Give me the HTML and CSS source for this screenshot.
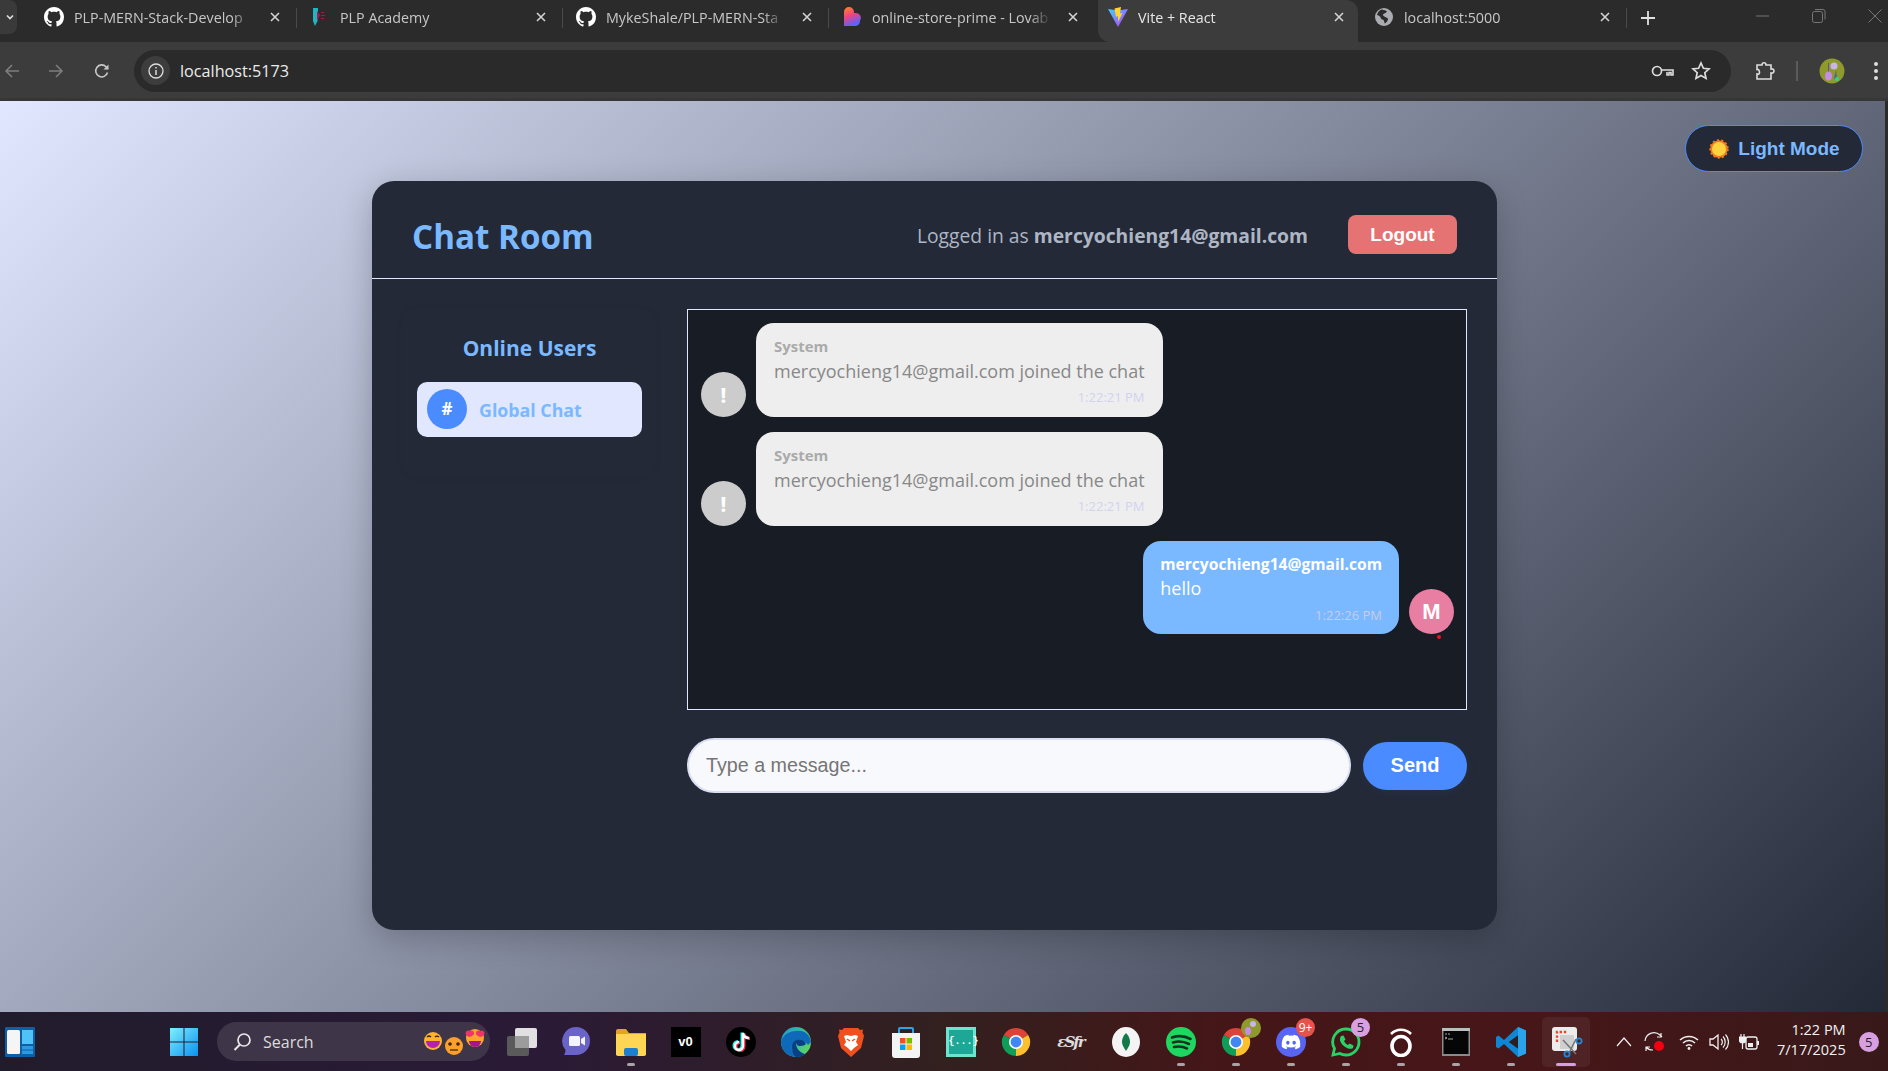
FILE: index.html
```html
<!DOCTYPE html>
<html lang="en">
<head>
<meta charset="utf-8">
<title>Vite + React</title>
<link rel="stylesheet" href="styles.css">
</head>
<body>
<svg class="defs" aria-hidden="true">
  <symbol id="gh" viewBox="0 0 16 16"><path fill="#fff" d="M8 0C3.58 0 0 3.58 0 8c0 3.54 2.29 6.53 5.47 7.59.4.07.55-.17.55-.38 0-.19-.01-.82-.01-1.49-2.01.37-2.53-.49-2.69-.94-.09-.23-.48-.94-.82-1.13-.28-.15-.68-.52-.01-.53.63-.01 1.08.58 1.23.82.72 1.21 1.87.87 2.33.66.07-.52.28-.87.51-1.07-1.78-.2-3.64-.89-3.64-3.95 0-.87.31-1.59.82-2.15-.08-.2-.36-1.02.08-2.12 0 0 .67-.21 2.2.82.64-.18 1.32-.27 2-.27.68 0 1.36.09 2 .27 1.53-1.04 2.2-.82 2.2-.82.44 1.1.16 1.92.08 2.12.51.56.82 1.27.82 2.15 0 3.07-1.87 3.75-3.65 3.95.29.25.54.73.54 1.48 0 1.07-.01 1.93-.01 2.2 0 .21.15.46.55.38A8.013 8.013 0 0016 8c0-4.42-3.58-8-8-8z"/></symbol>
  <symbol id="x" viewBox="0 0 12 12"><path d="M2 2l8 8M10 2l-8 8" stroke="#d4d4d4" stroke-width="1.6" fill="none"/></symbol>
  <symbol id="chrome" viewBox="0 0 32 32">
    <path fill="#db4437" d="M16 16L3 8.500A15 15 0 0 1 29 8.500Z"/>
    <path fill="#0f9d58" d="M16 16L3 8.500A15 15 0 0 0 16 31Z"/>
    <path fill="#fbc02d" d="M16 16L29 8.500A15 15 0 0 1 16 31Z"/>
    <circle cx="16" cy="16" r="7.500" fill="#fff"/><circle cx="16" cy="16" r="5.800" fill="#4285f4"/>
  </symbol>
  <symbol id="globe" viewBox="0 0 20 20"><circle cx="10" cy="10" r="9" fill="#a9acb0"/><path fill="#2b2b2b" d="M8 2.500c2 1 4 .5 5 2-1 2-3 1.500-4 3-.5 1 1 1.500 2 2.500 2 .5 3 1 3 2.500-.5 2-2 3-3 4-1-.500-.500-2.500-1.500-3.500-2-.5-3-2-3.500-3.500-1-1-2-1.500-3-1.500.5-2.500 2.500-5 4.500-5.500z"/></symbol>
</svg>

<div class="tabbar">
  <button class="tab-list"><svg width="12" height="12" viewBox="0 0 12 12"><path d="M3 4.500l3 3 3-3" stroke="#ddd" stroke-width="1.700" fill="none"/></svg></button>
  <div class="tab"><svg class="fav"><use href="#gh"/></svg><span class="tab-title">PLP-MERN-Stack-Develop</span><svg class="close"><use href="#x"/></svg></div>
  <div class="tab sep"><svg class="fav" viewBox="0 0 20 20"><path fill="#1fb6c4" d="M3 1h5v12l-3 6-2-5z"/><path fill="#b3124e" d="M7 4l3 4-3 6zM11 5h3v1h-3zM11 8h4v1h-4zM11 11h3v1h-3z"/></svg><span class="tab-title">PLP Academy</span><svg class="close"><use href="#x"/></svg></div>
  <div class="tab sep"><svg class="fav"><use href="#gh"/></svg><span class="tab-title">MykeShale/PLP-MERN-Sta</span><svg class="close"><use href="#x"/></svg></div>
  <div class="tab sep"><svg class="fav" viewBox="0 0 20 20"><defs><linearGradient id="lov" x1="0" y1="0" x2=".4" y2="1"><stop offset="0" stop-color="#ff8a1f"/><stop offset=".5" stop-color="#f0427f"/><stop offset="1" stop-color="#5a62ff"/></linearGradient></defs><path fill="url(#lov)" d="M2 5a5 5 0 0 1 10 0v1h2a5 5 0 0 1 4 8 5 5 0 0 1-4 5H2z"/></svg><span class="tab-title">online-store-prime - Lovab</span><svg class="close"><use href="#x"/></svg></div>
  <div class="tab active"><svg class="fav" viewBox="0 0 20 20"><defs><linearGradient id="vite" x1="0" y1="0" x2="1" y2="1"><stop offset="0" stop-color="#41d1ff"/><stop offset="1" stop-color="#bd34fe"/></linearGradient></defs><path fill="url(#vite)" d="M0 2l10 1.500L20 2 10 20z"/><path fill="#ffd62e" d="M13 0L6.500 1.500 8 10l2-1v6l4.500-9-2.500.5z"/></svg><span class="tab-title">Vite + React</span><svg class="close"><use href="#x"/></svg></div>
  <div class="tab"><svg class="fav"><use href="#globe"/></svg><span class="tab-title">localhost:5000</span><svg class="close"><use href="#x"/></svg></div>
  <span class="tab-divider"></span>
  <svg class="newtab" width="14" height="14" viewBox="0 0 14 14"><path d="M7 0v14M0 7h14" stroke="#e0e0e0" stroke-width="1.800"/></svg>
  <div class="winctl">
    <svg width="14" height="14" viewBox="0 0 14 14"><path d="M0 7h13" stroke="#777" stroke-width="1"/></svg>
    <svg width="14" height="14" viewBox="0 0 14 14"><rect x=".5" y="2.500" width="10" height="11" rx="2" fill="none" stroke="#777"/><path d="M3 .5h8a2 2 0 0 1 2 2v8" fill="none" stroke="#777"/></svg>
    <svg width="14" height="14" viewBox="0 0 14 14"><path d="M.5.5l13 13M13.500.5l-13 13" stroke="#777"/></svg>
  </div>
</div>

<div class="toolbar">
  <svg class="nav" width="16" height="16" viewBox="0 0 16 16"><path d="M15 8H2M8 2L2 8l6 6" stroke="#7d7d7d" stroke-width="1.600" fill="none"/></svg>
  <svg class="nav" width="16" height="16" viewBox="0 0 16 16"><path d="M1 8h13M8 2l6 6-6 6" stroke="#7d7d7d" stroke-width="1.600" fill="none"/></svg>
  <svg class="nav" width="16" height="16" viewBox="0 0 16 16"><path d="M13.500 9.500A6 6 0 1 1 12 3.700L14 6" stroke="#c8c8c8" stroke-width="1.600" fill="none"/><path d="M14.500 1.500v5h-5z" fill="#c8c8c8"/></svg>
  <div class="omnibox">
    <span class="site-info"><svg width="16" height="16" viewBox="0 0 16 16"><circle cx="8" cy="8" r="7" fill="none" stroke="#ddd" stroke-width="1.300"/><path d="M8 7v5M8 4v1.600" stroke="#ddd" stroke-width="1.500"/></svg></span>
    <span class="url">localhost:5173</span>
    <svg class="omni-icon" width="24" height="14" viewBox="0 0 24 14"><circle cx="6" cy="7" r="4.500" fill="none" stroke="#ddd" stroke-width="1.700"/><path d="M10.500 6H22v5h-2V8.500h-2V11h-2V8" fill="none" stroke="#ddd" stroke-width="1.600"/></svg>
    <svg class="omni-star" width="20" height="20" viewBox="0 0 20 20"><path d="M10 2l2.400 5.300 5.600.6-4.200 3.800 1.200 5.700-5-2.900-5 2.900 1.200-5.700L2 7.900l5.600-.6z" fill="none" stroke="#ddd" stroke-width="1.700"/></svg>
  </div>
  <svg class="ext" width="20" height="20" viewBox="0 0 20 20"><path d="M2 4h5c0-3 4-3 4 0h5v4c2-.5 3 1 3 2s-1 2.500-3 2v6H2v-5c2 .5 2.500-.5 2.500-1.500S4 8 2 8.500z" fill="none" stroke="#ddd" stroke-width="1.600"/></svg>
  <span class="tool-sep"></span>
  <svg class="profile" width="26" height="26" viewBox="0 0 26 26"><circle cx="13" cy="13" r="12.500" fill="#8f9a2c"/><circle cx="15" cy="8" r="3.500" fill="#c9b5e8"/><path d="M9 5h1v10H9z" fill="#6c4aa0"/><ellipse cx="9.500" cy="18" rx="3.500" ry="4.500" fill="#c78be8"/><path d="M17 12l1 9h-3z" fill="#4a5fa0"/><circle cx="18" cy="21" r="2" fill="#2dd48f"/></svg>
  <svg class="kebab" width="6" height="20" viewBox="0 0 6 20"><circle cx="3" cy="3" r="2" fill="#ddd"/><circle cx="3" cy="10" r="2" fill="#ddd"/><circle cx="3" cy="17" r="2" fill="#ddd"/></svg>
</div>

<main class="page">
  <button class="theme-toggle"><svg width="22" height="22" viewBox="0 0 22 22"><circle cx="11" cy="11" r="8.700" fill="#f47a1f" stroke="#f47a1f" stroke-width="2" stroke-dasharray="2 2.300"/><circle cx="11" cy="11" r="7" fill="#ffd23f"/></svg><span>Light Mode</span></button>
  <section class="chat-card">
    <header class="chat-head">
      <h1 class="chat-title">Chat Room</h1>
      <div class="chat-user">Logged in as <strong>mercyochieng14@gmail.com</strong></div>
      <button class="logout">Logout</button>
    </header>
    <div class="chat-body">
      <aside class="users">
        <h2 class="users-title">Online Users</h2>
        <div class="user-item"><span class="user-hash">#</span><span class="user-name">Global Chat</span></div>
      </aside>
      <div class="chat-main">
        <div class="messages">
          <div class="msg">
            <span class="avatar sys">!</span>
            <div class="bubble"><div class="sender">System</div><div class="text">mercyochieng14@gmail.com joined the chat</div><div class="time">1:22:21 PM</div></div>
          </div>
          <div class="msg">
            <span class="avatar sys">!</span>
            <div class="bubble"><div class="sender">System</div><div class="text">mercyochieng14@gmail.com joined the chat</div><div class="time">1:22:21 PM</div></div>
          </div>
          <div class="msg own">
            <div class="bubble"><div class="sender">mercyochieng14@gmail.com</div><div class="text">hello</div><div class="time">1:22:26 PM</div></div>
            <span class="avatar me">M<i class="status"></i></span>
          </div>
        </div>
        <form class="composer">
          <input class="composer-input" type="text" placeholder="Type a message...">
          <button class="send" type="button">Send</button>
        </form>
      </div>
    </div>
  </section>
</main>

<footer class="taskbar">
  <svg class="tb-widget" width="30" height="30" viewBox="0 0 30 30"><rect width="30" height="30" rx="1" fill="#0f5ea8"/><rect x="2" y="3" width="13" height="24" rx="1.500" fill="#f5f5f5"/><rect x="17" y="3" width="11" height="14" fill="#4fc3f7"/><rect x="17" y="19" width="11" height="3.500" fill="#2a9be0"/><rect x="17" y="23.500" width="11" height="3.500" fill="#2a9be0"/></svg>
  <svg class="tb-start" width="30" height="30" viewBox="0 0 30 30"><defs><linearGradient id="win" x1="0" y1="0" x2="1" y2="1"><stop offset="0" stop-color="#7df0ff"/><stop offset="1" stop-color="#0c8fee"/></linearGradient></defs><path fill="url(#win)" d="M1 1h13.500v13.500H1zM15.500 1H29v13.500H15.500zM1 15.500h13.500V29H1zM15.500 15.500H29V29H15.500z"/></svg>
  <div class="tb-search">
    <svg width="20" height="20" viewBox="0 0 20 20"><circle cx="12" cy="8" r="6" fill="none" stroke="#e8e8e8" stroke-width="1.700"/><path d="M8 12.500L2.500 18" stroke="#e8e8e8" stroke-width="2"/></svg>
    <span class="tb-search-text">Search</span>
    <svg class="tb-emoji" width="66" height="30" viewBox="0 0 66 30">
      <circle cx="10" cy="12" r="9" fill="#fdb232"/><path d="M3 12h14a7 7 0 0 1-14 0z" fill="#b521b0"/><path d="M4 8q2-2 4 0M12 8q2-2 4 0" stroke="#3a2200" stroke-width="1.200" fill="none"/>
      <circle cx="52" cy="9" r="9" fill="#fda52e"/><path d="M46 12h12a6 6 0 0 1-12 0z" fill="#a8148f"/><path d="M47 2c2-1.500 4 0 4 2.500 0 2-3 3-4.500 3.500-1.500-.5-4-2-4-3.500C42.500 2 45 1 47 2zM57 2c2-1.500 4.500 0 4.500 2.500 0 1.500-2.500 3-4 3.500-1.500-.5-4.500-1.500-4.500-3.500C53 2 55 .5 57 2z" fill="#f2326a"/>
      <circle cx="31" cy="17" r="9" fill="#fd9f2c"/><circle cx="27" cy="15" r="1.800" fill="#3a2200"/><circle cx="35" cy="15" r="1.800" fill="#3a2200"/><path d="M27 21h8" stroke="#3a2200" stroke-width="1.200"/>
    </svg>
  </div>
  <div class="tb-apps">
    <div class="app"><svg width="32" height="30" viewBox="0 0 32 30"><rect x="2" y="9" width="22" height="20" rx="2" fill="#5a5a5a"/><rect x="10" y="1" width="22" height="20" rx="2" fill="#f0f0f0" fill-opacity=".92"/><rect x="10" y="9" width="14" height="12" fill="#9c9c9c"/></svg></div>
    <div class="app"><svg width="30" height="32" viewBox="0 0 30 32"><path d="M15 1a14 14 0 1 1 0 28H3c1-1.500 1.500-3.500 1.500-5A14 14 0 0 1 15 1z" fill="#6a64c8"/><rect x="8" y="10" width="11" height="10" rx="1.500" fill="#f4f4fb"/><path d="M20 13l4-2.500v9L20 17z" fill="#f4f4fb"/></svg></div>
    <div class="app"><svg width="30" height="28" viewBox="0 0 30 28"><path d="M0 3a2 2 0 0 1 2-2h8l3 4h17v22H0z" fill="#e2a51b"/><path d="M0 6h30v20a2 2 0 0 1-2 2H2a2 2 0 0 1-2-2z" fill="#ffd654"/><rect x="8" y="20" width="14" height="8" rx="2" fill="#1e7fd0"/></svg><i class="dot"></i></div>
    <div class="app"><span class="v0">v0</span></div>
    <div class="app"><svg width="30" height="30" viewBox="0 0 30 30"><circle cx="15" cy="15" r="15" fill="#000"/><path d="M17 6v13a4 4 0 1 1-4-4M17 6c.5 3 2.500 5 6 5" fill="none" stroke="#25f4ee" stroke-width="3" transform="translate(-1 -.5)"/><path d="M17 6v13a4 4 0 1 1-4-4M17 6c.5 3 2.500 5 6 5" fill="none" stroke="#fe2c55" stroke-width="3" transform="translate(1 .5)"/><path d="M17 6v13a4 4 0 1 1-4-4M17 6c.5 3 2.500 5 6 5" fill="none" stroke="#fff" stroke-width="2.400"/></svg></div>
    <div class="app"><svg width="30" height="30" viewBox="0 0 30 30"><defs><linearGradient id="edgeg" x1="0" y1="0" x2="1" y2=".6"><stop offset="0" stop-color="#1a9ad8"/><stop offset="1" stop-color="#57d468"/></linearGradient></defs><circle cx="15" cy="15" r="15" fill="url(#edgeg)"/><path d="M0 15A15 15 0 0 0 15 30c4 0 7-1 9-3-6 2-12 0-13-5-1-4 3-8 8-8 3 0 6 1 8 4l3-3C29 8 24 3 15 4 7 4 1 9 0 15z" fill="#0e6ab8"/><path d="M11 20c0-5 4-8 8-7 3 0 5 2 6 4-1 1-3 2-6 2-3 0-3-2-4-3 0 5 3 9 9 11-2 2-5 3-9 3-3-2-4-6-4-10z" fill="#0a3f86"/></svg></div>
    <div class="app"><svg width="26" height="30" viewBox="0 0 26 30"><path d="M6 1h14l2 2 3-.5-.5 3L26 9l-3 12-10 9-10-9L0 9l1.500-3.500L1 2.500 4 3z" fill="#f0501e"/><path d="M6 9l3-1 4 1 4-1 3 1-2 6 2 3-4 3-3 3-3-3-4-3 2-3z" fill="#fff"/><path d="M9 12l3 2M17 12l-3 2" stroke="#f0501e" stroke-width="1.500"/></svg></div>
    <div class="app"><svg width="30" height="32" viewBox="0 0 30 32"><path d="M8 8V3a1 1 0 0 1 1-1h12a1 1 0 0 1 1 1v5" fill="none" stroke="#2aa5e8" stroke-width="2"/><path d="M1 7h28v22a3 3 0 0 1-3 3H4a3 3 0 0 1-3-3z" fill="#f4f4f4"/><rect x="9" y="12" width="5.500" height="5.500" fill="#f25022"/><rect x="15.500" y="12" width="5.500" height="5.500" fill="#7fba00"/><rect x="9" y="18.500" width="5.500" height="5.500" fill="#00a4ef"/><rect x="15.500" y="18.500" width="5.500" height="5.500" fill="#ffb900"/></svg></div>
    <div class="app"><span class="braces">{...}</span></div>
    <div class="app"><svg width="30" height="30"><use href="#chrome"/></svg></div>
    <div class="app"><span class="esb">ɛSfr</span></div>
    <div class="app"><svg width="28" height="30" viewBox="0 0 28 30"><ellipse cx="14" cy="15" rx="14" ry="15" fill="#f4f4f4"/><path d="M14 6c3 3 4 6 4 9s-2 6-4 9c-2-3-4-6-4-9s1-6 4-9z" fill="#13794c"/></svg></div>
    <div class="app"><svg width="30" height="30" viewBox="0 0 30 30"><circle cx="15" cy="15" r="15" fill="#1ed760"/><path d="M6 10.500c6-2 13-1.500 18.500 1.500M7 15.500c5-1.500 11-1 16 1.500M8 20c4.500-1 9-.5 13 1.500" fill="none" stroke="#16331f" stroke-width="2.600" stroke-linecap="round"/></svg><i class="dot"></i></div>
    <div class="app"><svg width="30" height="30"><use href="#chrome"/></svg><i class="dot"></i><svg class="badge-pic" width="20" height="20" viewBox="0 0 20 20"><circle cx="10" cy="10" r="10" fill="#8f9a2c"/><ellipse cx="7" cy="13" rx="3" ry="4" fill="#c78be8"/><circle cx="12" cy="6" r="3" fill="#c9b5e8"/></svg></div>
    <div class="app"><svg width="30" height="30" viewBox="0 0 30 30"><circle cx="15" cy="15" r="15" fill="#5865f2"/><svg x="5.500" y="5.500" width="19" height="19" viewBox="0 0 24 24"><path fill="#fff" d="M20.317 4.370a19.791 19.791 0 0 0-4.885-1.515.074.074 0 0 0-.079.037c-.21.375-.444.864-.608 1.250a18.270 18.270 0 0 0-5.487 0 12.640 12.640 0 0 0-.617-1.250.077.077 0 0 0-.079-.037A19.736 19.736 0 0 0 3.677 4.370a.07.07 0 0 0-.032.027C.533 9.046-.32 13.580.099 18.057a.082.082 0 0 0 .031.057 19.900 19.900 0 0 0 5.993 3.030.078.078 0 0 0 .084-.028c.462-.63.874-1.295 1.226-1.994a.076.076 0 0 0-.041-.106 13.107 13.107 0 0 1-1.872-.892.077.077 0 0 1-.008-.128 10.200 10.200 0 0 0 .372-.292.074.074 0 0 1 .077-.01c3.928 1.793 8.180 1.793 12.062 0a.074.074 0 0 1 .078.01c.12.098.246.198.373.292a.077.077 0 0 1-.006.127 12.299 12.299 0 0 1-1.873.892.077.077 0 0 0-.041.107c.36.698.772 1.362 1.225 1.993a.076.076 0 0 0 .084.028 19.839 19.839 0 0 0 6.002-3.030.077.077 0 0 0 .032-.054c.5-5.177-.838-9.674-3.549-13.660a.061.061 0 0 0-.031-.03zM8.020 15.330c-1.183 0-2.157-1.085-2.157-2.419 0-1.333.956-2.419 2.157-2.419 1.210 0 2.176 1.096 2.157 2.420 0 1.333-.956 2.418-2.157 2.418zm7.975 0c-1.183 0-2.157-1.085-2.157-2.419 0-1.333.955-2.419 2.157-2.419 1.210 0 2.176 1.096 2.157 2.420 0 1.333-.946 2.418-2.157 2.418z"/></svg></svg><i class="dot"></i><span class="count red">9+</span></div>
    <div class="app"><svg width="30" height="30" viewBox="0 0 30 30"><path d="M15 2a13 13 0 0 1 0 26c-2.500 0-4.500-.5-6-1.500L2 28l1.500-6.500A13 13 0 0 1 15 2z" fill="none" stroke="#25d366" stroke-width="2.800"/><path d="M10 9l2.500-.5 2 4-1.500 1.500c1 2 2 3 4 4l1.500-1.500 4 2-.5 2.500c-1 1-3 1-5 .5-4-1.500-7-4.500-8-8-.3-2 .5-3.500 1-4.500z" fill="#25d366"/></svg><i class="dot"></i><span class="count lilac">5</span></div>
    <div class="app"><svg width="24" height="30" viewBox="0 0 24 30"><path d="M2 7a14 14 0 0 1 20 0" fill="none" stroke="#fff" stroke-width="2.600"/><ellipse cx="12" cy="19" rx="9" ry="9.500" fill="none" stroke="#fff" stroke-width="3.600"/></svg><i class="dot"></i></div>
    <div class="app"><svg width="28" height="28" viewBox="0 0 28 28"><rect width="28" height="28" fill="#8a8a8a"/><rect y="0" width="28" height="3" fill="#bdbdbd"/><rect x="1.500" y="3" width="25" height="23" fill="#060606"/><path d="M3 6h2M6 6h2M3 9l2 1-2 1M6 11h5" stroke="#cfcfcf" stroke-width=".8" fill="none"/></svg><i class="dot"></i></div>
    <div class="app"><svg width="30" height="30" viewBox="0 0 30 30"><path d="M22 0l8 3.500v23L22 30 8 17l-5.500 4.500L0 20V10l2.500-1.500L8 13zM22 8.500L13 15l9 6.500z" fill="#0f86d4"/><path d="M22 0l8 3.500v23L22 30z" fill="#2aa3ea"/><path d="M22 8.500v13L13 15z" fill="#2b2020"/></svg><i class="dot"></i></div>
    <div class="app current"><svg width="34" height="32" viewBox="0 0 34 32"><rect x="3" y="1" width="25" height="24" rx="3" fill="#ececec"/><path d="M8 16V6h10" fill="none" stroke="#e8452c" stroke-width="2.400" stroke-dasharray="2.400 1.800"/><path d="M11 9h14v14H11z" fill="#d0d0d0"/><path d="M14 14l13 14M27 13L20 27" stroke="#777" stroke-width="1.600"/><circle cx="30" cy="15" r="2.600" fill="none" stroke="#1f88d8" stroke-width="1.800"/><circle cx="18" cy="28" r="2.600" fill="none" stroke="#1f88d8" stroke-width="1.800"/></svg><i class="dot wide"></i></div>
  </div>
  <div class="tray">
    <svg class="tray-up" width="16" height="10" viewBox="0 0 16 10"><path d="M1 9l7-8 7 8" fill="none" stroke="#f0f0f0" stroke-width="1.200"/></svg>
    <svg class="tray-sync" width="24" height="24" viewBox="0 0 24 24"><path d="M2 11a9 9 0 0 1 15-6l2 2M18 3v4h-4" fill="none" stroke="#eee" stroke-width="1.200"/><path d="M10 20a9 9 0 0 1-7-3M3 21v-4h4" fill="none" stroke="#eee" stroke-width="1.200"/><circle cx="16" cy="16" r="5" fill="#f40012"/></svg>
    <svg width="20" height="16" viewBox="0 0 20 16"><path d="M1 6a13 13 0 0 1 18 0M4 9a8.500 8.500 0 0 1 12 0M7 12a4 4 0 0 1 6 0" fill="none" stroke="#f0f0f0" stroke-width="1.500"/><circle cx="10" cy="14.500" r="1.400" fill="#f0f0f0"/></svg>
    <svg width="20" height="18" viewBox="0 0 20 18"><path d="M1 6h3l5-4v14l-5-4H1z" fill="none" stroke="#f0f0f0" stroke-width="1.300"/><path d="M12 6a4 4 0 0 1 0 6M14 3.500a8 8 0 0 1 0 11M16.500 1.500a11 11 0 0 1 0 15" fill="none" stroke="#f0f0f0" stroke-width="1.200"/></svg>
    <svg width="20" height="18" viewBox="0 0 20 18"><path d="M2 1v3M5 1v3M0.500 4h6v3a3 3 0 0 1-6 0zM3.500 10v6" stroke="#f0f0f0" stroke-width="1.200" fill="#f0f0f0"/><rect x="7" y="4" width="11" height="12" rx="2" fill="none" stroke="#f0f0f0" stroke-width="1.300"/><rect x="18" y="8" width="2" height="4" fill="#f0f0f0"/><rect x="9" y="10" width="5" height="4" fill="#f0f0f0"/></svg>
    <div class="clock"><span>1:22 PM</span><span>7/17/2025</span></div>
    <span class="tray-badge">5</span>
  </div>
</footer>
</body>
</html>
```

FILE: styles.css
```css
* { box-sizing: border-box; }
html, body { margin: 0; height: 1071px; overflow: hidden; }
body { display: flex; flex-direction: column; font-family: "Open Sans", "Noto Sans", sans-serif; background: #2b2b2b; color: #fff; }
.defs { display: none; }
button { font-family: "Liberation Sans", Arial, sans-serif; border: 0; cursor: pointer; }

/* browser tab strip */
.tabbar { height: 42px; flex: none; display: flex; align-items: center; background: #2b2b2b; position: relative; }
.tab-list { height: 34px; padding: 0 0 0 3px; margin-top: -8px; background: #3a3a3a; border-radius: 0 8px 8px 0; display: flex; align-items: center; justify-content: center; flex: none; width: 17px; margin-right: 13px; }
.tab { width: 266px; height: 42px; flex: none; display: flex; align-items: center; padding: 0 15px 8px 14px; position: relative; font-size: 14.300px; color: #c7c7c7; }
.tab.sep::before { content: ""; position: absolute; left: 0; top: 8px; height: 20px; width: 1px; background: #4a4a4a; }
.tab.active { background: #3c3c3c; color: #e6e6e6; clip-path: inset(0 2px 0 4px round 0 12px 0 12px); }
.fav { width: 20px; height: 20px; flex: none; }
.tab-title { flex: 1; margin: 0 0 0 10px; white-space: nowrap; overflow: hidden; -webkit-mask-image: linear-gradient(90deg, #000 88%, transparent 100%); mask-image: linear-gradient(90deg, #000 88%, transparent 100%); }
.close { width: 12px; height: 12px; flex: none; margin-left: 16px; }
.tab-divider { width: 1px; height: 20px; background: #4a4a4a; margin-top: -6px; flex: none; }
.newtab { margin: -6px 0 0 14px; flex: none; }
.winctl { margin-left: auto; display: flex; gap: 42px; padding: 0 6px 10px 0; }

/* browser toolbar */
.toolbar { height: 59px; flex: none; display: flex; align-items: center; background: #3c3c3c; border-bottom: 3px solid #363636; padding: 1px 0 0 4px; }
.nav { margin-right: 28px; flex: none; }
.nav:nth-child(3) { margin-right: 0; margin-left: 2px; }
.omnibox { margin-left: 24px; width: 1597px; height: 42px; background: #2a2a2a; border-radius: 21px; display: flex; align-items: center; padding-left: 7px; flex: none; }
.site-info { width: 29px; height: 29px; border-radius: 50%; background: #3d3d3d; display: flex; align-items: center; justify-content: center; flex: none; }
.url { margin-left: 10px; font-size: 16.200px; color: #ececec; flex: 1; }
.omni-icon { margin-right: 16px; }
.omni-star { margin-right: 20px; }
.ext { margin-left: 24px; flex: none; }
.tool-sep { width: 2px; height: 20px; background: #5b5b5b; margin-left: 21px; flex: none; }
.profile { margin-left: 21px; flex: none; }
.kebab { margin-left: 28px; flex: none; }

/* page */
.page { flex: 1; min-height: 0; position: relative; border-right: 3px solid #2b2b2b; background: linear-gradient(135deg, #e0e7ff 0%, #232937 100%); padding: 80px 0 0 372px; }
.theme-toggle { position: absolute; top: 24px; right: 22px; width: 178px; height: 47px; border-radius: 24px; border: 1.5px solid #4a8cff; background: #232937; color: #7ab8ff; font-size: 19px; font-weight: 700; display: flex; align-items: center; justify-content: center; gap: 8px; padding: 0; }

.chat-card { width: 1125px; height: 749px; background: #232937; border-radius: 22px; box-shadow: 0 8px 32px rgba(0, 0, 0, .22); display: flex; flex-direction: column; }
.chat-head { height: 98px; flex: none; display: flex; align-items: center; padding: 0 40px; border-bottom: 1.5px solid #e0e7ff; }
.chat-title { margin: 14px auto 0 0; font-size: 33.200px; font-weight: 700; color: #7ab8ff; line-height: 40px; }
.chat-user { font-size: 19.300px; color: #aeb6c4; margin-top: 12px; }
.chat-user strong { font-weight: 700; }
.logout { width: 109px; height: 39px; margin: 10px 0 0 40px; background: #e57373; color: #fff; border-radius: 8px; font-size: 19px; font-weight: 700; padding: 0; }

.chat-body { display: flex; gap: 30px; padding: 29px 30px 0 29px; }
.users { width: 256px; height: 170px; flex: none; padding: 25px 15px 0 16px; border-radius: 18px; box-shadow: 0 0 5px rgba(0, 0, 0, .06); }
.users-title { margin: 0; text-align: center; font-size: 21px; line-height: 30px; font-weight: 700; color: #7ab8ff; }
.user-item { margin-top: 19px; height: 55px; background: #e0e7ff; border-radius: 10px; display: flex; align-items: center; gap: 12px; padding: 0 10px; }
.user-hash { width: 40px; height: 40px; border-radius: 50%; background: #4a8cff; color: #fff; font-size: 17px; font-weight: 700; display: flex; align-items: center; justify-content: center; margin-top: -2px; }
.user-name { font-size: 17.800px; font-weight: 700; color: #7ab8ff; margin-top: 1px; }

.chat-main { width: 780px; flex: none; }
.messages { height: 401px; margin-top: 1px; background: #181c24; border: 1px solid #e0e7ff; padding: 13px 12px 13px 13px; display: flex; flex-direction: column; gap: 15.500px; }
.msg { display: flex; align-items: flex-end; gap: 10px; }
.msg.own { justify-content: flex-end; }
.avatar { width: 45px; height: 45px; border-radius: 50%; flex: none; display: flex; align-items: center; justify-content: center; font-weight: 700; color: #fff; position: relative; font-size: 22px; }
.avatar.sys { background: #cccccc; }
.avatar.me { background: #e87ea1; font-family: "Liberation Sans", Arial, sans-serif; }
.status { position: absolute; right: 13px; bottom: -5px; width: 4px; height: 4px; border-radius: 50%; background: #ee1122; }
.bubble { background: #eeeeee; color: #888888; border-radius: 18px; padding: 13px 18px 9.500px; }
.sender { font-size: 15px; line-height: 20px; font-weight: 700; color: #aaaaaa; }
.text { font-size: 18px; line-height: 28px; margin-top: 1px; }
.time { font-size: 13px; line-height: 20px; text-align: right; color: #d2d2f0; margin-top: 2px; }
.own .bubble { background: #7ab8ff; color: #fff; padding: 13px 17px 9px; }
.own .sender { color: #fff; font-size: 15.600px; }
.own .text { line-height: 26px; }
.own .time { color: #c9cbee; margin-top: 4px; }

.composer { display: flex; align-items: center; gap: 12px; margin-top: 28px; }
.composer-input { width: 664px; height: 55px; border-radius: 28px; border: 2px solid #d9def2; background: #f8f9fc; padding: 0 17px; font: 19.700px "Liberation Sans", Arial, sans-serif; outline: none; }
.composer-input::placeholder { color: #757575; }
.send { width: 104px; height: 48px; border-radius: 24px; background: #4a8cff; color: #fff; font-size: 20px; font-weight: 700; padding: 0; box-shadow: 0 2px 8px rgba(74, 140, 255, .08); }

/* windows taskbar */
.taskbar { height: 59px; flex: none; display: flex; align-items: center; padding-left: 5px; background: linear-gradient(90deg, #211c2c 0%, #2a1a36 28%, #33201f 50%, #451618 65%, #461618 82%, #38191a 100%); }
.tb-widget { flex: none; }
.tb-start { flex: none; margin-left: 134px; }
.tb-search { flex: none; margin-left: 18px; width: 273px; height: 39px; border-radius: 20px; background: #3e3648; display: flex; align-items: center; padding: 0 1px 0 15px; }
.tb-search-text { margin-left: 11px; font-size: 16px; color: #dcdcdc; }
.tb-emoji { margin: 5px 0 0 auto; }
.tb-apps { display: flex; margin-left: 3px; flex: none; }
.app { width: 55px; height: 50px; display: flex; align-items: center; justify-content: center; position: relative; flex: none; }
.app.current { background: rgba(255, 255, 255, .06); border-radius: 5px; width: 48px; margin: 0 3.500px; }
.dot { position: absolute; left: 23.500px; bottom: 1px; width: 8px; height: 3px; border-radius: 2px; background: #aaa3a8; }
.dot.wide { left: 14px; width: 20px; background: #d79ee0; }
.v0 { width: 30px; height: 30px; background: #000; color: #fff; font: 700 13px/30px "Liberation Sans", sans-serif; text-align: center; }
.braces { width: 30px; height: 30px; background: #1ea796; border: 3px solid #6fe3cd; color: #fff; font: 700 10px/24px "Liberation Mono", monospace; text-align: center; }
.esb { font: italic 700 15px/30px "DejaVu Serif", serif; color: #ddd; letter-spacing: -2px; }
.badge-pic { position: absolute; left: 33px; top: 1px; }
.count { position: absolute; left: 33px; top: 1px; min-width: 19px; height: 19px; border-radius: 10px; font: 13px/19px "Open Sans", sans-serif; text-align: center; padding: 0 2px; }
.count.red { background: #e5534b; color: #fff; font-size: 12px; }
.count.lilac { background: #d8a0e0; color: #222; }

.tray { display: flex; align-items: center; flex: none; margin-left: 23px; gap: 10px; }
.tray-up { margin-right: 1px; }
.tray-sync { margin-right: 2px; }
.clock { display: flex; flex-direction: column; align-items: flex-end; font-size: 14.500px; line-height: 20px; color: #f2f2f2; margin: -3px 0 0 8px; }
.tray-badge { width: 20px; height: 20px; border-radius: 50%; background: #d8a0e0; color: #222; font-size: 13px; line-height: 20px; text-align: center; margin-left: 3px; }
```
